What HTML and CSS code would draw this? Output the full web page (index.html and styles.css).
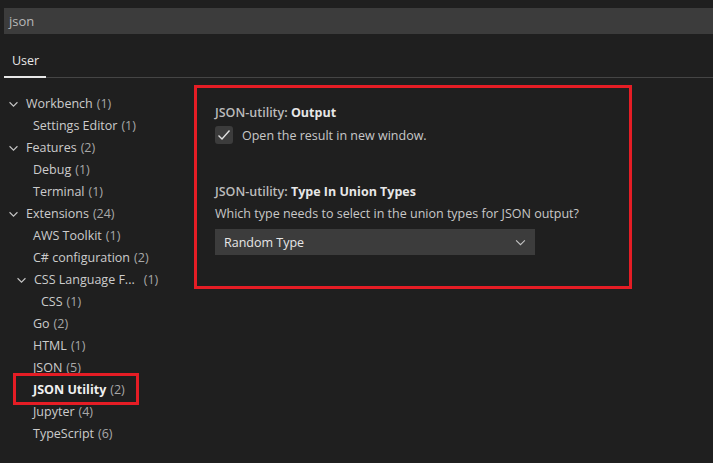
FILE: index.html
```html
<!DOCTYPE html>
<html>
<head>
<meta charset="utf-8">
<link rel="stylesheet" href="styles.css">
</head>
<body>
<div class="search">json</div>
<div class="tabs">
  <div class="tab">User</div>
</div>
<div class="main">
  <div class="tree">
    <div class="row l0"><svg class="chev" viewBox="0 0 8 8"><path d="M0.5 2 L4 5.5 L7.5 2" /></svg><span class="name">Workbench</span><span class="count">(1)</span></div>
    <div class="row l1"><span class="name">Settings Editor</span><span class="count">(1)</span></div>
    <div class="row l0"><svg class="chev" viewBox="0 0 8 8"><path d="M0.5 2 L4 5.5 L7.5 2" /></svg><span class="name">Features</span><span class="count">(2)</span></div>
    <div class="row l1"><span class="name">Debug</span><span class="count">(1)</span></div>
    <div class="row l1"><span class="name">Terminal</span><span class="count">(1)</span></div>
    <div class="row l0"><svg class="chev" viewBox="0 0 8 8"><path d="M0.5 2 L4 5.5 L7.5 2" /></svg><span class="name">Extensions</span><span class="count">(24)</span></div>
    <div class="row l1"><span class="name">AWS Toolkit</span><span class="count">(1)</span></div>
    <div class="row l1"><span class="name">C# configuration</span><span class="count">(2)</span></div>
    <div class="row l1c"><svg class="chev" viewBox="0 0 8 8"><path d="M0.5 2 L4 5.5 L7.5 2" /></svg><span class="name trunc">CSS Language F...</span><span class="count wide">(1)</span></div>
    <div class="row l2"><span class="name">CSS</span><span class="count">(1)</span></div>
    <div class="row l1"><span class="name">Go</span><span class="count">(2)</span></div>
    <div class="row l1"><span class="name">HTML</span><span class="count">(1)</span></div>
    <div class="row l1"><span class="name">JSON</span><span class="count">(5)</span></div>
    <div class="row l1 active"><span class="name">JSON Utility</span><span class="count">(2)</span></div>
    <div class="row l1"><span class="name">Jupyter</span><span class="count">(4)</span></div>
    <div class="row l1"><span class="name">TypeScript</span><span class="count">(6)</span></div>
  </div>
  <div class="content">
    <div class="box">
      <div class="title"><span class="cat">JSON-utility: </span><span class="key">Output</span></div>
      <div class="checkrow">
        <div class="checkbox"><svg viewBox="0 0 18 18"><path d="M3.5 9.5 L7 13 L14.5 4.5" /></svg></div>
        <span class="desc">Open the result in new window.</span>
      </div>
      <div class="title second"><span class="cat">JSON-utility: </span><span class="key">Type In Union Types</span></div>
      <div class="desc line">Which type needs to select in the union types for JSON output?</div>
      <div class="select"><span>Random Type</span><svg class="selchev" viewBox="0 0 12 8"><path d="M1 1.5 L6 6.5 L11 1.5" /></svg></div>
    </div>
  </div>
</div>
</body>
</html>
```
FILE: styles.css
```css
html, body {
  margin: 0;
  padding: 0;
  background: #1f1f1f;
  font-family: "Open Sans", "Noto Sans", sans-serif;
  color: #cccccc;
  height: 100%;
  overflow: hidden;
}

.search {
  margin: 8px 0 0 4px;
  height: 26px;
  line-height: 26px;
  background: #3c3c3c;
  padding-left: 5px;
  font-size: 13px;
  color: #b8b8b8;
}

.tabs {
  margin: 15px 0 0 4px;
  border-bottom: 1px solid #454545;
  height: 28px;
  display: flex;
}

.tab {
  width: 42px;
  box-sizing: border-box;
  padding-left: 8px;
  padding-top: 2px;
  font-size: 12.5px;
  line-height: 20px;
  color: #e7e7e7;
  border-bottom: 2px solid #e7e7e7;
  height: 29px;
}

.main {
  display: flex;
}

.tree {
  width: 194px;
  padding-top: 15px;
  font-size: 12.5px;
}

.row {
  height: 22px;
  line-height: 22px;
  display: flex;
  align-items: center;
  white-space: nowrap;
  position: relative;
}

.chev {
  width: 9px;
  height: 9px;
  fill: none;
  stroke: #c5c5c5;
  stroke-width: 1;
  margin-right: 8px;
}

.l0 { padding-left: 9px; }
.l1 { padding-left: 33px; }
.l1c { padding-left: 17px; }
.l2 { padding-left: 41px; }

.name { color: #cccccc; }
.count { color: #a8a8a8; margin-left: 4px; }
.count.wide { margin-left: 9px; }

.active .name {
  font-weight: 700;
  color: #f0f0f0;
}

.active::after {
  content: "";
  position: absolute;
  left: 13px;
  top: -6px;
  width: 120px;
  height: 26px;
  border: 3px solid #e51d25;
}

.content {
  padding-top: 7px;
}

.box {
  border: 3px solid #e51d25;
  padding: 0 0 0 18px;
  box-sizing: border-box;
  width: 438px;
  height: 204px;
}

.title {
  margin-top: 16px;
  font-size: 12.5px;
  line-height: 18px;
  font-weight: 600;
}

.title .cat { color: #bbbbbb; }
.title .key { color: #e7e7e7; font-weight: 700; }

.title.second { margin-top: 39px; }

.checkrow {
  margin-top: 4px;
  display: flex;
  align-items: center;
  height: 18px;
}

.checkbox {
  width: 18px;
  height: 18px;
  background: #3c3c3c;
  border-radius: 3px;
  margin-right: 9px;
}

.checkbox svg {
  width: 18px;
  height: 18px;
  fill: none;
  stroke: #e0e0e0;
  stroke-width: 1.4;
}

.desc {
  font-size: 12.5px;
  color: #c8c8c8;
}

.desc.line {
  line-height: 18px;
  margin-top: 4px;
}

.select {
  margin-top: 6px;
  width: 320px;
  height: 26px;
  background: #3c3c3c;
  display: flex;
  align-items: center;
  justify-content: space-between;
  padding: 0 9px;
  box-sizing: border-box;
  font-size: 12.5px;
  color: #e7e7e7;
}

.selchev {
  width: 11px;
  height: 7px;
  fill: none;
  stroke: #c5c5c5;
  stroke-width: 1.2;
}
```
